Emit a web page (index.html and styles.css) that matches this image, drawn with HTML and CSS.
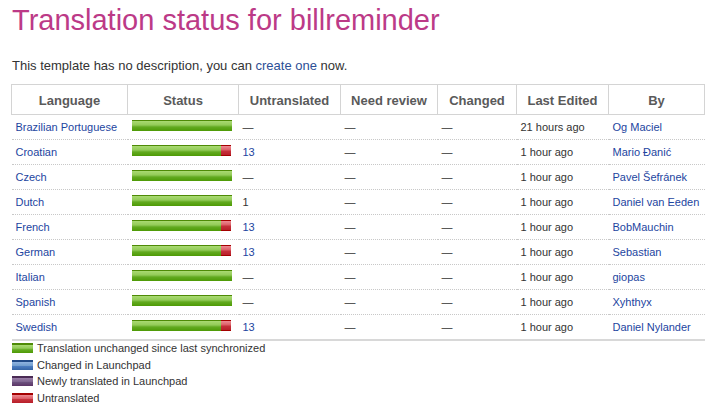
FILE: index.html
```html
<!DOCTYPE html>
<html>
<head>
<meta charset="utf-8">
<link rel="stylesheet" href="styles.css">
</head>
<body>
<h1 class="title">Translation status for billreminder</h1>
<p class="desc">This template has no description, you can <a href="#">create one</a> now.</p>
<table class="status">
  <thead>
    <tr>
      <th class="c-lang">Language</th>
      <th class="c-status">Status</th>
      <th class="c-untr">Untranslated</th>
      <th class="c-rev">Need review</th>
      <th class="c-chg">Changed</th>
      <th class="c-last">Last Edited</th>
      <th class="c-by">By</th>
    </tr>
  </thead>
  <tbody>
    <tr><td><a href="#">Brazilian Portuguese</a></td><td><div class="bar"><span class="seg ok" style="width:100px"></span></div></td><td>—</td><td>—</td><td>—</td><td>21 hours ago</td><td><a href="#">Og Maciel</a></td></tr>
    <tr><td><a href="#">Croatian</a></td><td><div class="bar"><span class="seg ok" style="width:89px"></span><span class="seg un" style="width:10px"></span></div></td><td><a href="#">13</a></td><td>—</td><td>—</td><td>1 hour ago</td><td><a href="#">Mario Đanić</a></td></tr>
    <tr><td><a href="#">Czech</a></td><td><div class="bar"><span class="seg ok" style="width:100px"></span></div></td><td>—</td><td>—</td><td>—</td><td>1 hour ago</td><td><a href="#">Pavel Šefránek</a></td></tr>
    <tr><td><a href="#">Dutch</a></td><td><div class="bar"><span class="seg ok" style="width:100px"></span></div></td><td>1</td><td>—</td><td>—</td><td>1 hour ago</td><td><a href="#">Daniel van Eeden</a></td></tr>
    <tr><td><a href="#">French</a></td><td><div class="bar"><span class="seg ok" style="width:89px"></span><span class="seg un" style="width:10px"></span></div></td><td><a href="#">13</a></td><td>—</td><td>—</td><td>1 hour ago</td><td><a href="#">BobMauchin</a></td></tr>
    <tr><td><a href="#">German</a></td><td><div class="bar"><span class="seg ok" style="width:89px"></span><span class="seg un" style="width:10px"></span></div></td><td><a href="#">13</a></td><td>—</td><td>—</td><td>1 hour ago</td><td><a href="#">Sebastian</a></td></tr>
    <tr><td><a href="#">Italian</a></td><td><div class="bar"><span class="seg ok" style="width:100px"></span></div></td><td>—</td><td>—</td><td>—</td><td>1 hour ago</td><td><a href="#">giopas</a></td></tr>
    <tr><td><a href="#">Spanish</a></td><td><div class="bar"><span class="seg ok" style="width:100px"></span></div></td><td>—</td><td>—</td><td>—</td><td>1 hour ago</td><td><a href="#">Xyhthyx</a></td></tr>
    <tr><td><a href="#">Swedish</a></td><td><div class="bar"><span class="seg ok" style="width:89px"></span><span class="seg un" style="width:10px"></span></div></td><td><a href="#">13</a></td><td>—</td><td>—</td><td>1 hour ago</td><td><a href="#">Daniel Nylander</a></td></tr>
  </tbody>
</table>
<ul class="legend">
  <li><span class="sw ok"></span>Translation unchanged since last synchronized</li>
  <li><span class="sw chg"></span>Changed in Launchpad</li>
  <li><span class="sw new"></span>Newly translated in Launchpad</li>
  <li><span class="sw un"></span>Untranslated</li>
</ul>
</body>
</html>
```
FILE: styles.css
```css
body {
  margin: 0;
  padding: 0 17px 0 11px;
  background: #fff;
  font-family: "Liberation Sans", Arial, sans-serif;
  color: #333;
}
a, a:visited, a:hover, a:focus, a:active { color: #1d45a0; text-decoration: none; outline: none; }
.title {
  margin: 0;
  padding: 3px 0 0 1px;
  font-size: 29px;
  font-weight: normal;
  line-height: 34px;
  color: #bc3a87;
}
.desc {
  margin: 21px 0 0 1px;
  font-size: 13px;
  line-height: 16px;
  color: #333;
}
.desc a, .desc a:visited { color: #2c4f96; }
.status {
  margin-top: 10px;
  width: 694px;
  border-collapse: collapse;
  font-size: 11px;
}
.status th {
  height: 27px;
  padding: 0;
  border: 1px solid #d4d4d4;
  font-size: 13px;
  font-weight: bold;
  color: #5a5a5a;
  text-align: center;
  vertical-align: middle;
  padding-top: 2px;
}
.c-lang { width: 115px; }
.c-status { width: 110px; }
.c-untr { width: 101px; }
.c-rev { width: 96px; }
.c-chg { width: 78px; }
.c-last { width: 91px; }
.status td {
  height: 24px;
  padding: 0 0 0 4px;
  border-bottom: 1px dotted #c8c8c8;
  text-align: left;
  vertical-align: middle;
  white-space: nowrap;
  color: #333;
}
.status tbody tr:last-child td { border-bottom: 2px solid #d8d8d8; }
.bar {
  display: flex;
  width: 100px;
  height: 11px;
  margin-top: -3px;
}
.seg { display: block; height: 11px; box-sizing: border-box; }
.ok {
  background: linear-gradient(#a9da72 0%, #93cb58 40%, #62aa20 60%, #4e9a06 100%);
  border-top: 1px solid #4e8a06;
}
.un {
  background: linear-gradient(#ec8a92 0%, #dc5d66 45%, #c6323c 55%, #b81f2a 100%);
  border-top: 1px solid #a40000;
  border-bottom: 1px solid #a40000;
}
.legend {
  list-style: none;
  margin: -1px 0 0 1px;
  padding: 0;
  font-size: 11px;
  color: #333;
}
.legend li {
  display: flex;
  align-items: center;
  height: 16.6px;
}
.sw {
  display: block;
  width: 21px;
  height: 10px;
  margin-right: 4px;
  box-sizing: border-box;
}
.sw.ok { border-top: 2px solid #4e8a06; }
.sw.chg {
  background: linear-gradient(#8fb3e0 0%, #729fcf 45%, #4a7bbf 55%, #3465a4 100%);
  border-top: 2px solid #204a87;
}
.sw.new {
  background: linear-gradient(#9a7ea8 0%, #7f6590 45%, #6a4f7c 55%, #5c3566 100%);
  border-top: 2px solid #4a2b55;
}
.sw.un {
  border-top: 2px solid #a40000;
  border-bottom: none;
}
```
